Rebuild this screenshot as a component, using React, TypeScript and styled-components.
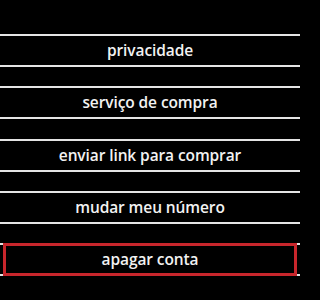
import React from 'react'
import styled, { createGlobalStyle } from 'styled-components'

const GlobalStyle = createGlobalStyle`
  html, body {
    margin: 0;
    padding: 0;
    background: #000;
  }
`

const Screen = styled.div`
  width: 300px;
  height: 300px;
  background: #000;
  box-sizing: border-box;
  padding-top: 34px;
  display: flex;
  flex-direction: column;
  gap: 19.25px;
  font-family: "Open Sans", "Noto Sans", sans-serif;
`

const Row = styled.button<{ $focused?: boolean }>`
  position: relative;
  display: flex;
  align-items: center;
  justify-content: center;
  height: 33px;
  width: 100%;
  box-sizing: border-box;
  margin: 0;
  padding: 0 0 1px;
  background: #000;
  border: none;
  border-top: 2px solid #e4e4e4;
  border-bottom: 2px solid #e4e4e4;
  color: #f2f2f2;
  font-family: inherit;
  font-size: 15.5px;
  font-weight: 600;
  letter-spacing: -0.1px;

  &::after {
    content: '';
    display: ${p => (p.$focused ? 'block' : 'none')};
    position: absolute;
    top: -2px;
    bottom: -2px;
    left: 3px;
    right: 3px;
    border: 3px solid #c8262c;
  }
`

const items = [
  'privacidade',
  'serviço de compra',
  'enviar link para comprar',
  'mudar meu número',
  'apagar conta',
]

export default function App() {
  return (<>
    <GlobalStyle />
    <Screen>
      {items.map((label, i) => (
        <Row key={label} $focused={i === items.length - 1}>{label}</Row>
      ))}
    </Screen>
  </>)
}
